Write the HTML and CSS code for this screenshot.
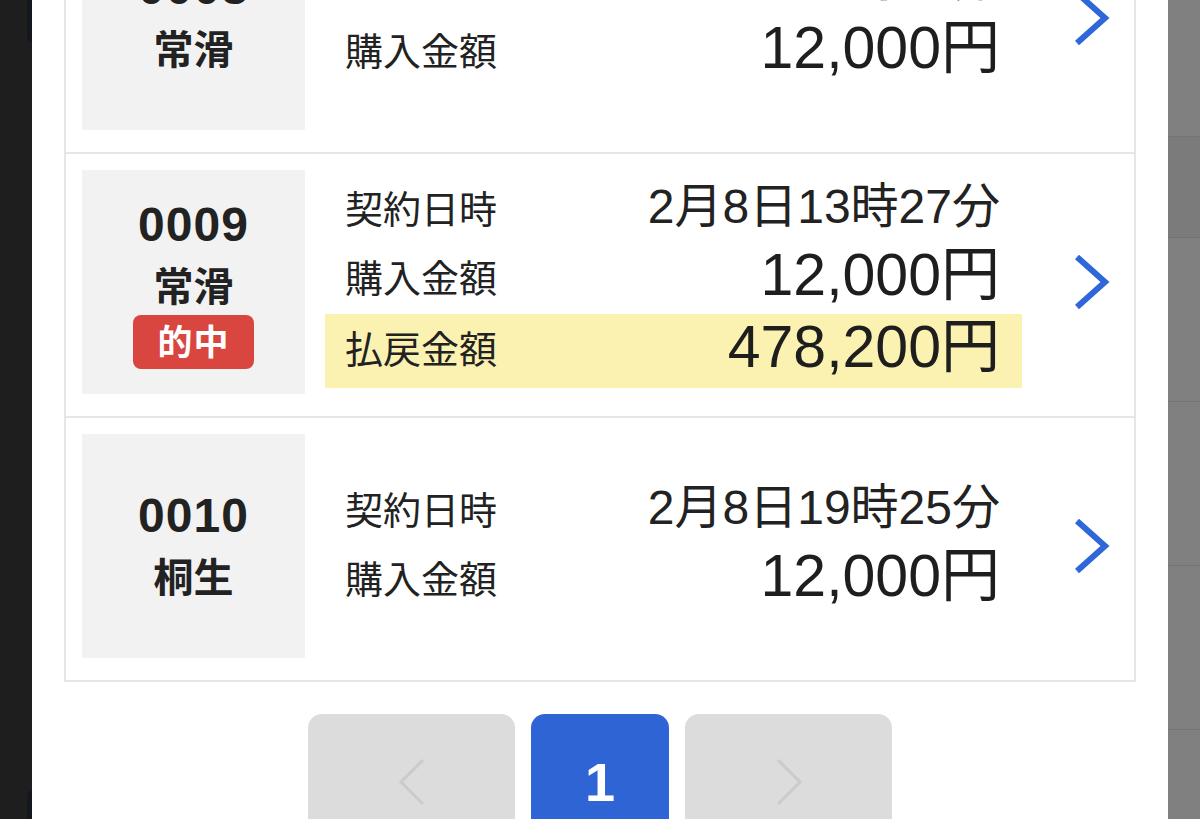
FILE: index.html
```html
<!DOCTYPE html>
<html lang="ja">
<head>
<meta charset="utf-8">
<title>購入履歴</title>
<link rel="stylesheet" href="styles.css">
</head>
<body>
<div class="left-strip"><div class="left-knob top"></div><div class="left-knob bottom"></div></div>
<main class="main">
  <div class="list">
    <div class="card">
      <div class="race">
        <div class="race-no">0008</div>
        <div class="race-place">常滑</div>
      </div>
      <div class="info">
        <div class="row"><span class="label">契約日時</span><span class="date">2月8日12時41分</span></div>
        <div class="row"><span class="label">購入金額</span><span class="amount">12,000円</span></div>
      </div>
      <div class="go"><svg class="chev" viewBox="0 0 38 56" width="38" height="56"><path d="M5 3 L33 28 L5 53" /></svg></div>
    </div>
    <div class="card">
      <div class="race">
        <div class="race-no">0009</div>
        <div class="race-place">常滑</div>
        <div class="hit">的中</div>
      </div>
      <div class="info">
        <div class="row"><span class="label">契約日時</span><span class="date">2月8日13時27分</span></div>
        <div class="row"><span class="label">購入金額</span><span class="amount">12,000円</span></div>
        <div class="row payout"><span class="label">払戻金額</span><span class="amount">478,200円</span></div>
      </div>
      <div class="go"><svg class="chev" viewBox="0 0 38 56" width="38" height="56"><path d="M5 3 L33 28 L5 53" /></svg></div>
    </div>
    <div class="card">
      <div class="race">
        <div class="race-no">0010</div>
        <div class="race-place">桐生</div>
      </div>
      <div class="info">
        <div class="row"><span class="label">契約日時</span><span class="date">2月8日19時25分</span></div>
        <div class="row"><span class="label">購入金額</span><span class="amount">12,000円</span></div>
      </div>
      <div class="go"><svg class="chev" viewBox="0 0 38 56" width="38" height="56"><path d="M5 3 L33 28 L5 53" /></svg></div>
    </div>
  </div>
  <nav class="pager">
    <div class="pg pg-arrow"><svg class="pg-chev" viewBox="0 0 30 48" width="30" height="48"><path d="M26 2 L4 24 L26 46" /></svg></div>
    <div class="pg pg-current">1</div>
    <div class="pg pg-arrow"><svg class="pg-chev" viewBox="0 0 30 48" width="30" height="48"><path d="M4 2 L26 24 L4 46" /></svg></div>
  </nav>
</main>
<div class="right-strip">
  <div class="rs-seg rs-a"></div>
  <div class="rs-seg rs-band"></div>
  <div class="rs-seg rs-b"></div>
  <div class="rs-seg rs-c"></div>
  <div class="rs-seg rs-d"></div>
</div>
</body>
</html>
```

FILE: styles.css
```css
* { box-sizing: border-box; }
html, body { margin: 0; padding: 0; }
body {
  width: 1200px;
  height: 819px;
  overflow: hidden;
  display: flex;
  background: #fff;
  font-family: "Liberation Sans", "Noto Sans CJK JP", sans-serif;
  color: #222;
}
.left-strip {
  width: 32px;
  flex: none;
  background: #1e1e1e;
  position: relative;
}
.left-knob {
  position: absolute;
  right: 0;
  width: 5px;
  height: 42px;
  background: #15171f;
}
.left-knob.top { top: 0; border-bottom-left-radius: 5px; }
.left-knob.bottom { bottom: 0; height: 28px; border-top-left-radius: 5px; }
.main {
  flex: none;
  width: 1136px;
  padding: 0 32px;
  background: #fff;
}
.list {
  margin-top: -112px;
  border: 2px solid #e6e6e6;
}
.card {
  display: flex;
  align-items: center;
  padding: 16px 0 22px 16px;
}
.card + .card { border-top: 2px solid #e6e6e6; }
.race {
  width: 223px;
  height: 224px;
  flex: none;
  background: #f2f2f2;
  display: flex;
  flex-direction: column;
  align-items: center;
  justify-content: center;
  font-weight: 700;
  color: #222;
}
.race-no {
  font-size: 48px;
  line-height: 60px;
  letter-spacing: 1px;
}
.race-place {
  font-family: "Noto Sans CJK JP", sans-serif;
  font-size: 40px;
  line-height: 58px;
  padding-bottom: 2px;
}
.hit {
  width: 121px;
  height: 54px;
  border-radius: 8px;
  background: #d9463f;
  color: #fff;
  font-family: "Noto Sans CJK JP", sans-serif;
  font-size: 35px;
  line-height: 50px;
  padding-bottom: 4px;
  text-align: center;
  letter-spacing: 1px;
}
.info {
  width: 697px;
  flex: none;
  margin-left: 20px;
}
.row {
  height: 69px;
  display: flex;
  align-items: center;
  justify-content: space-between;
  padding: 0 22px 8px 20px;
}
.row.payout {
  height: 74px;
  background: #fbf1b1;
}
.label {
  font-family: "Noto Sans CJK JP", sans-serif;
  font-size: 38px;
  line-height: 1;
  color: #222;
}
.date {
  font-size: 48px;
  line-height: 1;
  color: #222;
}
.amount {
  font-size: 59px;
  line-height: 1;
  color: #1e1e1e;
}
.go {
  flex: 1;
  padding-left: 50px;
  display: flex;
  align-items: center;
}
.chev path {
  fill: none;
  stroke: #2f66d9;
  stroke-width: 6;
}
.pager {
  margin-top: 32px;
  display: flex;
  justify-content: center;
  gap: 16px;
}
.pg {
  height: 136px;
  border-radius: 14px;
  display: flex;
  align-items: center;
  justify-content: center;
}
.pg-arrow {
  width: 207px;
  background: #dcdcdc;
}
.pg-current {
  width: 138px;
  background: #2f64d4;
  color: #fff;
  font-size: 54px;
  font-weight: 700;
}
.pg-chev path {
  fill: none;
  stroke: #cbcbcb;
  stroke-width: 3;
}
.right-strip {
  width: 32px;
  flex: none;
  background: #808080;
  display: flex;
  flex-direction: column;
}
.rs-seg { border-bottom: 1px solid #747474; flex: none; }
.rs-a { height: 137px; }
.rs-band { height: 101px; background: #7b7b7b; }
.rs-b { height: 164px; }
.rs-c { height: 164px; }
.rs-d { height: 164px; }
```
